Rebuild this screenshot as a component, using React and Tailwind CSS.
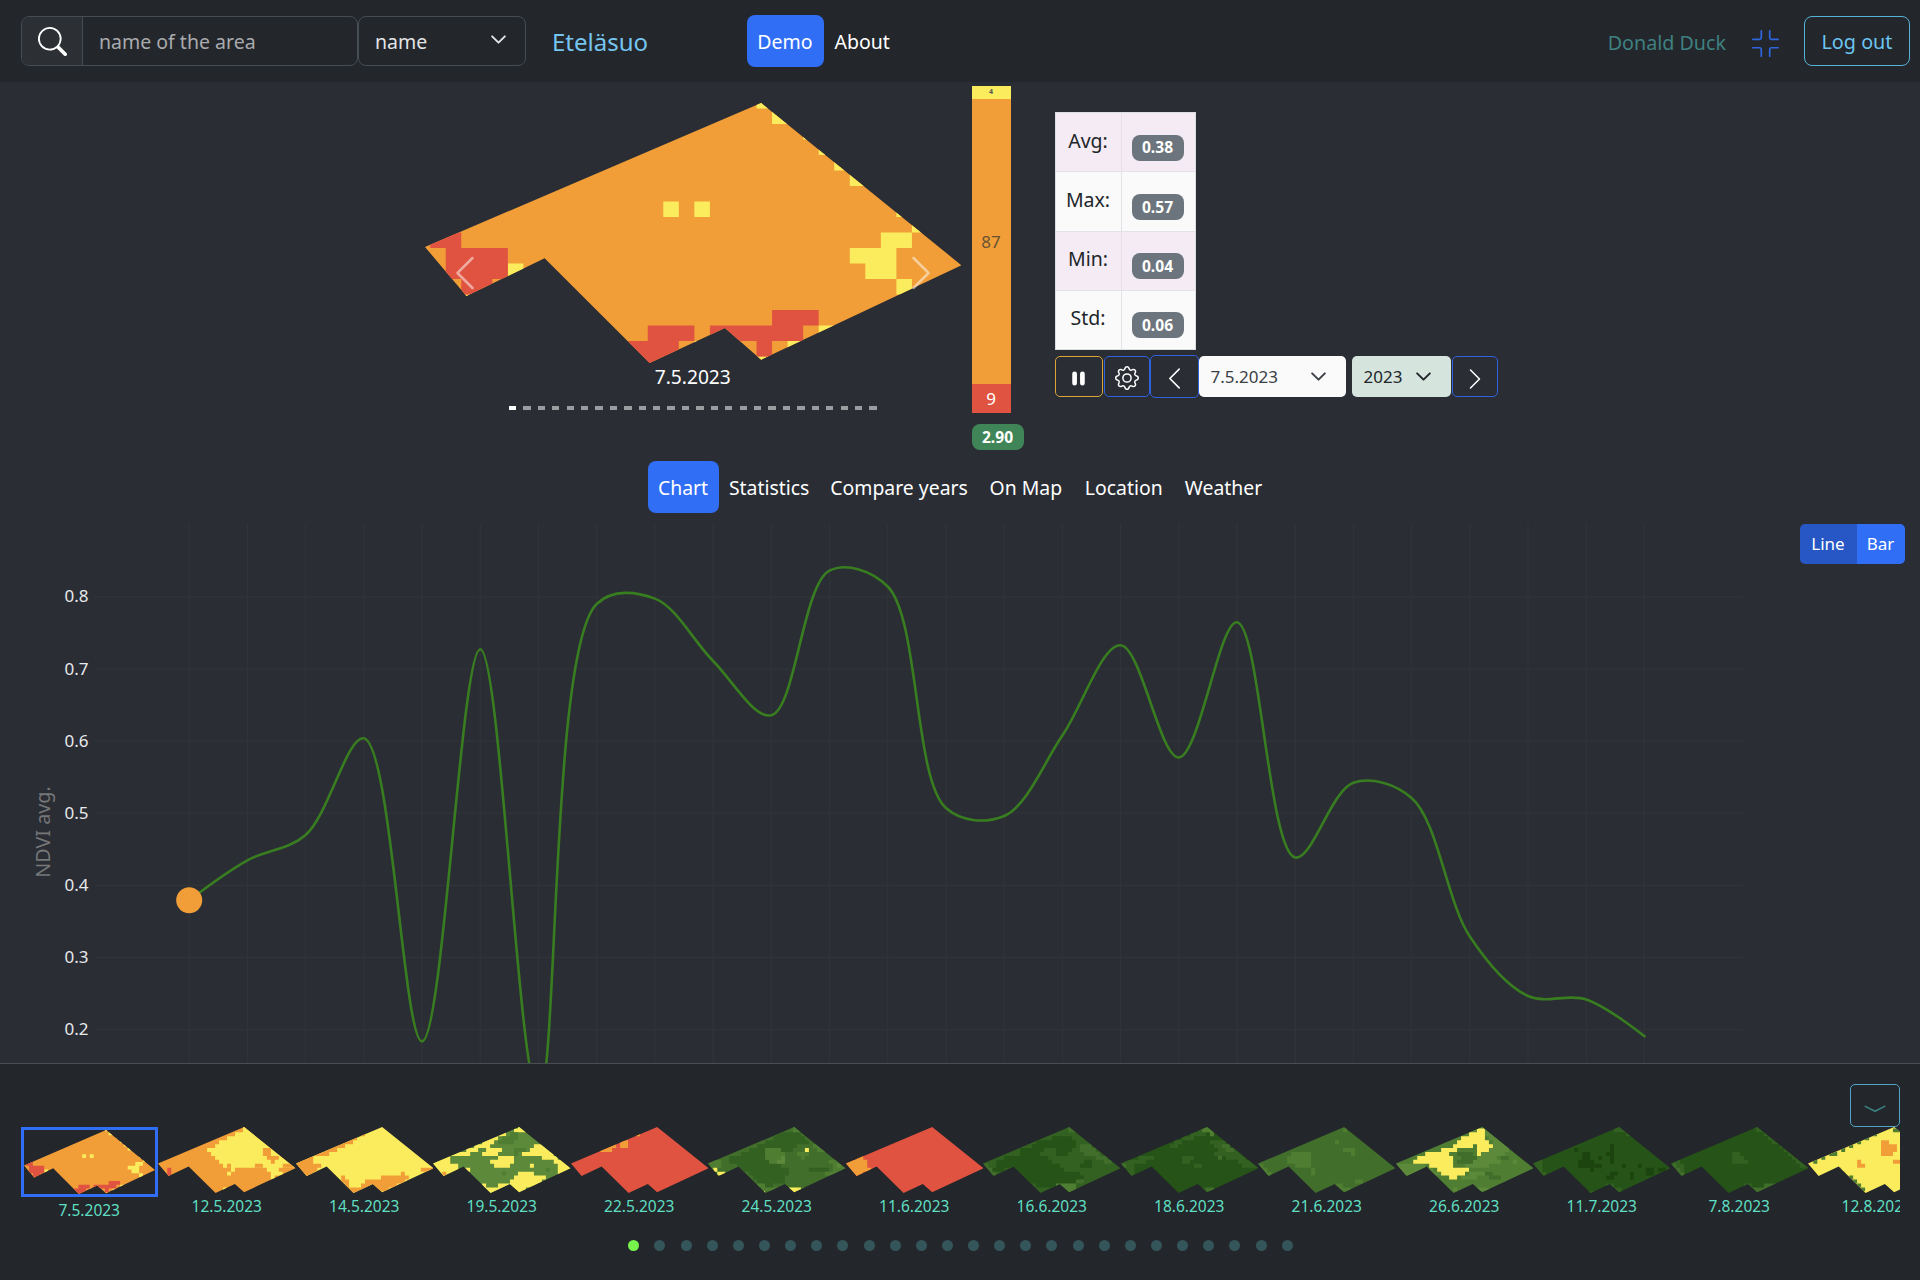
import React from 'react';
import {
  BsChevronCompactDown,
  BsChevronLeft,
  BsChevronRight,
  BsFullscreenExit,
  BsGear,
  BsPauseFill,
  BsSearch,
} from 'react-icons/bs';

const RED = '#e05340';
const ORANGE = '#f19e38';
const YELLOW = '#fbec5d';
const G1 = '#5c8a3a';
const G2 = '#4f7e33';
const G3 = '#416f2b';
const G4 = '#336122';
const G5 = '#265317';
const G6 = '#1c440f';

const OUTLINE =
  '0.667,9.935 22.3,0.645 35.19,11.118 22.3,17.204 19.965,15.16 15.12,17.42 8.363,10.667 3.333,13.097';

// Each layer lists runs of raster cells as "row:firstColumn-endColumn".
const FIELDS = [
  {
    date: '7.5.2023',
    base: ORANGE,
    layers: [
      [YELLOW, '0:22-23 1:23-24 2:25-26 3:26-27 4:27-28 5:28-29 7:31-32 8:32-33 7:16-17 7:18-19 9:30-32 10:28-31 11:29-31 12:31-32 15:26-27 16:24-25 17:22-23 11:6-7 13:3-4 16:18-19'],
      [RED, '9:1-3 10:2-6 11:2-6 12:3-5 14:23-26 15:15-18 15:19-25 16:13-17 16:22-23 17:13-17'],
    ],
  },
  {
    date: '12.5.2023',
    base: ORANGE,
    layers: [
      [YELLOW, '0:22-36 1:22-36 2:20-36 3:18-36 4:16-36 5:15-36 6:13-36 7:14-36 8:15-36 9:16-36 10:17-36 11:19-20 11:28-31 12:18-19 12:29-32 13:29-30 16:17-18'],
      [ORANGE, '6:27-29 7:27-29 8:28-31 9:29-30 10:18-19 10:25-27 10:32-36'],
      [RED, '11:3-4 12:3-4'],
    ],
  },
  {
    date: '14.5.2023',
    base: YELLOW,
    layers: [
      [ORANGE, '1:17-19 2:15-18 3:14-16 4:12-15 5:10-13 6:8-11 7:5-9 8:0-5 9:0-5 10:0-7 11:0-6 12:0-5 13:0-4 13:12-13 14:12-14 15:13-14 16:13-17 17:13-17 11:32-36 12:27-28 13:22-29 14:18-28 15:17-26 16:17-24'],
    ],
  },
  {
    date: '19.5.2023',
    base: G1,
    layers: [
      [YELLOW, '0:22-24 1:21-24 2:17-19 3:14-17 4:13-16 5:11-15 5:26-29 6:9-12 6:14-18 6:25-30 7:5-10 7:13-17 7:23-31 8:0-5 8:17-21 8:28-32 9:0-5 9:15-21 9:31-34 10:0-7 10:16-20 10:25-26 10:32-35 11:0-7 11:8-10 11:32-36 12:0-7 12:22-26 12:32-34 13:3-4 13:21-29 14:20-28 15:13-14 15:17-27 16:13-24 17:13-24'],
      [ORANGE, '12:3-4'],
      [G2, '2:20-22 3:18-22 4:17-21 6:21-24 7:21-22 12:18-19 11:29-30'],
    ],
  },
  {
    date: '22.5.2023',
    base: RED,
    layers: [[ORANGE, '2:17-18 4:13-15 5:9-12 5:13-15 6:8-11']],
  },
  {
    date: '24.5.2023',
    base: G3,
    layers: [
      [G4, '2:18-24 3:17-25 4:15-26 5:13-23 6:11-22 7:9-15 8:6-15 9:6-16 10:8-19 11:9-21 12:11-21 13:12-20 14:13-20 15:14-17 11:26-31'],
      [G2, '0:22-24 1:22-25 6:15-19 7:15-20 8:15-20 9:16-20 5:27-29 6:28-30 7:23-26 8:24-25 9:0-4 10:0-4 11:0-3 9:31-35 10:32-36 11:32-36 12:30-34 15:13-15 16:14-26'],
      [G1, '8:19-20 9:18-20 11:1-2 10:33-34'],
      [YELLOW, '6:25-26 11:2-3 12:3-5 16:21-24 17:14-15 17:21-24'],
    ],
  },
  {
    date: '11.6.2023',
    base: RED,
    layers: [[ORANGE, '8:3-5 9:0-6 10:0-6 11:0-7 12:0-5 13:0-5']],
  },
  {
    date: '16.6.2023',
    base: G4,
    layers: [
      [G5, '3:18-23 4:14-24 5:13-24 6:10-16 6:19-23 7:10-15 7:19-22 8:6-17 9:4-18 9:26-28 10:4-20 10:25-28 11:3-6 11:8-21 12:10-25 13:11-26 14:12-25 15:14-20'],
      [G3, '0:22-24 1:22-24 5:25-28 6:25-29 7:26-30 8:29-32 9:31-33 10:0-2 11:1-3 12:2-4 14:24-26'],
      [G2, '15:19-24 16:21-24 17:21-24'],
    ],
  },
  {
    date: '18.6.2023',
    base: G5,
    layers: [
      [G4, '1:20-25 2:18-22 3:16-19 4:14-16 5:13-15 8:5-9 9:0-7 10:0-4 11:2-4 12:2-4 8:16-19 9:16-18 10:19-21 4:23-27 5:24-28 6:25-30 7:24-31 8:27-32 9:30-34 10:31-36 16:21-24 17:21-24'],
      [G3, '5:26-28 6:27-29 8:25-26 16:22-24 10:0-2'],
      [G2, '0:21-24 1:21-24 2:23-24'],
    ],
  },
  {
    date: '21.6.2023',
    base: G3,
    layers: [
      [G2, '1:22-23 4:20-21 6:22-25 7:24-25 7:9-14 8:8-14 9:8-14 10:10-14 11:14-15 12:14-15 10:0-2 11:1-3 12:2-4 14:25-27 15:20-22 16:20-24 17:21-24'],
    ],
  },
  {
    date: '26.6.2023',
    base: G2,
    layers: [
      [G1, '0:22-24 1:18-25 2:23-26 3:24-27 4:25-29 5:25-31 6:24-29 7:21-28 8:21-26 9:20-27 10:0-8 11:0-10 12:2-12 10:18-24 12:19-23 13:17-21 16:21-24'],
      [G3, '7:16-20 8:17-21 9:16-20 12:23-25 13:24-27 8:27-29'],
      [YELLOW, '1:21-23 2:19-23 3:17-23 4:16-24 5:15-20 5:21-25 6:12-16 6:21-24 7:8-14 7:21-22 8:6-15 9:5-15 10:9-15 11:11-19 12:12-18 13:14-16'],
      [G1, '9:30-31 16:15-16'],
    ],
  },
  {
    date: '11.7.2023',
    base: G5,
    layers: [
      [G4, '0:21-24 1:21-24 2:24-25 9:0-3 10:0-3 11:1-3 12:2-4 15:19-21 16:20-23 17:21-23 17:14-16'],
      [G6, '5:20-21 6:11-12 6:20-21 7:13-15 7:19-21 8:13-15 8:17-18 8:20-21 9:12-16 9:20-21 10:12-18 10:23-24 10:27-28 11:15-16 11:29-31 11:32-34 12:20-22 12:25-26 12:29-31 13:19-21 13:25-26'],
    ],
  },
  {
    date: '7.8.2023',
    base: G5,
    layers: [
      [G4, '0:21-24 1:22-25 2:24-25 3:25-27 4:26-28 5:28-29 6:29-30 7:30-32 8:31-33 9:32-34 10:33-36 7:16-18 8:16-19 9:16-20 9:0-3 10:0-4 11:1-4 15:19-21'],
      [G3, '10:1-2 11:2-3 12:2-4 13:3-4 16:20-25 17:21-24 15:24-27'],
    ],
  },
  {
    date: '12.8.2023',
    base: YELLOW,
    layers: [
      [G2, '0:23-24 1:18-19 1:22-25 2:17-18 2:24-26 3:15-16 4:13-14 5:11-12 6:9-10 7:6-8 8:4-5 9:2-3 11:8-9 12:9-10 13:11-12 14:12-13 15:13-14 16:14-15'],
      [ORANGE, '4:19-21 5:19-23 6:19-23 7:19-22 9:13-14 10:13-15 9:22-24'],
    ],
  },
];

function runsToPath(runs) {
  return runs
    .split(' ')
    .map((run) => {
      const [row, span] = run.split(':');
      const [from, to] = span.split('-').map(Number);
      return `M${from} ${row}h${to - from}v1h${from - to}z`;
    })
    .join('');
}

function Field({ field, id, className }) {
  return (
    <svg viewBox="0.667 0.645 34.523 16.775" preserveAspectRatio="none" className={className}>
      <clipPath id={id}>
        <polygon points={OUTLINE} />
      </clipPath>
      <polygon points={OUTLINE} fill={field.base} />
      <g clipPath={`url(#${id})`}>
        {field.layers.map(([color, runs], i) => (
          <path key={i} d={runsToPath(runs)} fill={color} />
        ))}
      </g>
    </svg>
  );
}

function Caret({ className }) {
  return (
    <svg viewBox="0 0 16 16" fill="none" className={className}>
      <path d="m2 5 6 6 6-6" stroke="currentColor" strokeWidth="1.8" strokeLinecap="round" strokeLinejoin="round" />
    </svg>
  );
}

function Navbar() {
  return (
    <header className="flex h-[82px] shrink-0 items-start bg-[#23262b] pl-[21px] pr-[10px]">
      <div className="mt-4 flex h-[50px] w-[337px] overflow-hidden rounded-lg border border-[#454c52]">
        <div className="flex w-[61px] items-center justify-center border-r border-[#454c52] bg-[#2c3035] text-white">
          <BsSearch className="h-[29px] w-[29px]" />
        </div>
        <div className="flex items-center pl-4 pt-[2px] text-[19.5px] text-[#a9abae]">name of the area</div>
      </div>
      <div className="mt-4 flex h-[50px] w-[168px] items-center justify-between rounded-lg border border-[#454c52] pl-4 pr-[18px] text-[19.5px] text-[#e2e4e6]">
        <span className="pt-[2px]">name</span>
        <Caret className="mb-1 h-[17px] w-[17px]" />
      </div>
      <div className="mt-[24px] w-[220.5px] pl-[26px] text-[24px] leading-[36px] text-[#76c5f0]">Eteläsuo</div>
      <nav className="mt-[14.5px] flex h-[52px] items-center text-[19.5px] text-white">
        <span className="flex h-full w-[77px] items-center justify-center rounded-lg bg-[#316ef6] pt-[2px]">Demo</span>
        <span className="pl-[11px] pt-[2px]">About</span>
      </nav>
      <div className="ml-auto mt-4 flex h-[50px] items-center">
        <span className="pt-[3px] text-[19.7px] text-[#3e8080]">Donald Duck</span>
        <BsFullscreenExit className="ml-[26px] mt-1 h-[27px] w-[27px] text-[#2f66e0]" />
        <span className="ml-[25px] flex h-full w-[106px] items-center justify-center rounded-lg border-[1.5px] border-[#55b3d6] pt-[2px] text-[19.8px] text-[#6cc4f0]">
          Log out
        </span>
      </div>
    </header>
  );
}

function Carousel() {
  return (
    <div className="relative ml-[424.5px] flex w-[536.5px] flex-col items-center pt-[20.5px]">
      <Field field={FIELDS[0]} id="main-field" className="h-[260px] w-[536.5px]" />
      <BsChevronLeft className="absolute left-[20px] top-[171px] h-[40px] w-[40px] text-white/50" />
      <BsChevronRight className="absolute right-[20.5px] top-[171px] h-[40px] w-[40px] text-white/50" />
      <div className="text-[19.2px] leading-[28px] text-white">7.5.2023</div>
      <div className="mt-[15.5px] flex gap-[7.1px]">
        {Array.from({ length: 26 }, (_, i) => (
          <span key={i} className={i === 0 ? 'h-[4px] w-[7.33px] bg-white' : 'h-[4px] w-[7.33px] bg-[#9a9ca0]'} />
        ))}
      </div>
    </div>
  );
}

function Distribution() {
  return (
    <div className="ml-[10.5px] mt-1 flex w-[52px] flex-col">
      <div className="flex w-[39px] flex-col text-center text-[17px]">
        <div className="flex h-[13px] items-center justify-center bg-[#fbec5d] text-[7px] font-bold text-[#555]">4</div>
        <div className="flex h-[285px] items-center justify-center bg-[#f19e38] text-[#6a5132]">87</div>
        <div className="flex h-[29px] items-center justify-center bg-[#e05340] text-white">9</div>
      </div>
      <div className="mt-[11px] flex h-[26px] items-center justify-center rounded-lg bg-[#3f8557] pt-px text-[15.6px] font-bold text-white">
        2.90
      </div>
    </div>
  );
}

const STATS = [
  ['Avg:', '0.38'],
  ['Max:', '0.57'],
  ['Min:', '0.04'],
  ['Std:', '0.06'],
];

function StatsTable() {
  return (
    <div className="flex h-[238px] w-[141px] flex-col border border-[#dcdee2] bg-[#fafafa]">
      {STATS.map(([label, value], i) => (
        <div
          key={label}
          className={
            i % 2 === 0
              ? 'flex flex-1 border-b border-[#e4e2e8] bg-[#f4ebf4]'
              : 'flex flex-1 border-b border-[#e4e2e8] last:border-b-0'
          }
        >
          <div className="w-[66px] border-r border-[#e4e2e8] pt-[12.5px] text-center text-[19.5px] leading-[30px] text-[#212529]">
            {label}
          </div>
          <div className="pl-[10px] pt-[21.5px]">
            <div className="flex h-[26px] w-[52px] items-center justify-center rounded-lg bg-[#6c757d] pt-px text-[15.6px] font-bold text-white">
              {value}
            </div>
          </div>
        </div>
      ))}
    </div>
  );
}

function Controls() {
  return (
    <div className="mt-[6px] flex h-[41px] items-center">
      <div className="flex h-[41px] w-[48px] items-center justify-center rounded-[5px] border-[1.5px] border-[#dca53a] text-white">
        <BsPauseFill className="mt-1 h-[25px] w-[25px]" />
      </div>
      <div className="ml-px flex h-[41px] w-[46px] items-center justify-center rounded-[5px] border-[1.5px] border-[#2f62dd] text-white">
        <BsGear className="mt-[3px] h-[24px] w-[24px]" />
      </div>
      <div className="flex h-[43px] w-[49px] items-center justify-center rounded-[5px] border-[1.5px] border-[#2f62dd] text-white">
        <BsChevronLeft className="mt-[3px] h-[25px] w-[25px]" />
      </div>
      <div className="flex h-[41px] w-[147px] items-center justify-between rounded-[5px] bg-[#fafafa] pl-3 pr-[19px] text-[17px] text-[#3a3f45]">
        7.5.2023
        <Caret className="h-[17px] w-[17px]" />
      </div>
      <div className="ml-[6px] flex h-[41px] w-[99px] items-center justify-between rounded-[5px] bg-[#d5e5de] pl-3 pr-[19px] text-[17px] text-[#212529]">
        2023
        <Caret className="h-[17px] w-[17px]" />
      </div>
      <div className="ml-px flex h-[41px] w-[46px] items-center justify-center rounded-[5px] border-[1.5px] border-[#2f62dd] text-white">
        <BsChevronRight className="mt-1 h-[24px] w-[24px]" />
      </div>
    </div>
  );
}

function Tabs() {
  return (
    <nav className="ml-[647.5px] flex h-[52px] shrink-0 items-center text-[19.4px] text-white">
      <span className="flex h-full w-[71px] items-center justify-center rounded-lg bg-[#316ef6] pt-[2px]">Chart</span>
      <span className="px-[10.4px] pt-[2px]">Statistics</span>
      <span className="px-[10.6px] pt-[2px]">Compare years</span>
      <span className="px-[11.2px] pt-[2px]">On Map</span>
      <span className="px-[11.5px] pt-[2px]">Location</span>
      <span className="px-[10.7px] pt-[2px]">Weather</span>
    </nav>
  );
}

const STEP = 58.21;
const LEFT = 189.2;
const SERIES = [
  900.2, 860.3, 835, 738.3, 1041.3, 649.2, 1095, 604, 598.6, 661, 715.3, 570.7, 586.5, 808, 816, 735.6, 645.2,
  757.5, 622.2, 857.5, 782.8, 798, 936.5, 996, 999.4, 1036.2,
].map((y, i) => ({ x: LEFT + STEP * i, y }));

// Centripetal Catmull-Rom spline, written as cubic Bézier segments.
function smoothPath(points) {
  const len = (a, b) => Math.hypot(b.x - a.x, b.y - a.y);
  let d = `M${points[0].x} ${points[0].y}`;
  for (let i = 0; i < points.length - 1; i++) {
    const p0 = points[i - 1];
    const p1 = points[i];
    const p2 = points[i + 1];
    const p3 = points[i + 2];
    const d12 = len(p1, p2);
    let c1 = p1;
    let c2 = p2;
    if (p0) {
      const d01 = len(p0, p1);
      const m = Math.sqrt(d01 * d12);
      const a = 2 * d01 + 3 * m + d12;
      const n = 3 * (d01 + m);
      c1 = { x: (p1.x * a - p0.x * d12 + p2.x * d01) / n, y: (p1.y * a - p0.y * d12 + p2.y * d01) / n };
    }
    if (p3) {
      const d23 = len(p2, p3);
      const m = Math.sqrt(d23 * d12);
      const b = 2 * d23 + 3 * m + d12;
      const n = 3 * (d23 + m);
      c2 = { x: (p2.x * b + p1.x * d23 - p3.x * d12) / n, y: (p2.y * b + p1.y * d23 - p3.y * d12) / n };
    }
    d += `C${c1.x} ${c1.y} ${c2.x} ${c2.y} ${p2.x} ${p2.y}`;
  }
  return d;
}

function Chart() {
  return (
    <section className="relative mt-[11px] h-[539px] shrink-0 overflow-hidden">
      <svg viewBox="0 524 1920 539" className="h-[539px] w-[1920px]">
        <g stroke="#313437" strokeWidth="1.2">
          {SERIES.map((p) => (
            <line key={p.x} x1={p.x} x2={p.x} y1="524" y2="1063" />
          ))}
          {[0, 1, 2, 3, 4, 5, 6].map((i) => (
            <line key={i} x1="95" x2="1742.5" y1={596.9 + 72.1 * i} y2={596.9 + 72.1 * i} />
          ))}
        </g>
        <g fill="#e8e9ea" fontSize="17" textAnchor="end">
          {['0.8', '0.7', '0.6', '0.5', '0.4', '0.3', '0.2'].map((label, i) => (
            <text key={label} x="88.5" y={602.4 + 72.1 * i}>
              {label}
            </text>
          ))}
        </g>
        <text transform="translate(50 832) rotate(-90)" textAnchor="middle" fontSize="19.8" fill="#757779">
          NDVI avg.
        </text>
        <path d={smoothPath(SERIES)} fill="none" stroke="#387d20" strokeWidth="2.6" strokeLinecap="round" />
        <circle cx={LEFT} cy="900.2" r="13" fill={ORANGE} />
      </svg>
      <div className="absolute right-[15.5px] top-0 flex h-[40px] overflow-hidden rounded-[5px] text-[17px] text-white">
        <span className="flex w-[57px] items-center justify-center bg-[#2657c5]">Line</span>
        <span className="flex w-[48px] items-center justify-center bg-[#316ef6]">Bar</span>
      </div>
    </section>
  );
}

function Timeline() {
  return (
    <footer className="flex flex-1 flex-col border-t border-[#4a4d52] bg-[#23262b] px-[20.5px]">
      <div className="mt-[20.5px] flex h-[43px] w-[50px] items-center justify-center self-end rounded-[5px] border-[1.5px] border-[#4fa3c7]">
        <BsChevronCompactDown className="mt-1 h-[26px] w-[26px] text-[#3a8080]" />
      </div>
      <div className="flex h-[102px] items-start overflow-hidden text-[15.5px] leading-[22px] text-[#5fdfc2]">
        {FIELDS.map((field, i) => (
          <div key={field.date} className="flex w-[137.5px] shrink-0 flex-col items-center">
            {i === 0 ? (
              <div className="h-[70px] w-[137px] border-[3.5px] border-[#316ef6]">
                <Field field={field} id="thumb-0" className="h-[64px] w-[131px]" />
              </div>
            ) : (
              <Field field={field} id={`thumb-${i}`} className="h-[66px] w-[137.5px]" />
            )}
            <span className="mt-[2px]">{field.date}</span>
          </div>
        ))}
      </div>
      <div className="ml-px mt-[11px] flex justify-center gap-[15.15px]">
        {Array.from({ length: 26 }, (_, i) => (
          <span
            key={i}
            className={i === 0 ? 'h-[11px] w-[11px] rounded-full bg-[#76f44b]' : 'h-[11px] w-[11px] rounded-full bg-[#34555a]'}
          />
        ))}
      </div>
    </footer>
  );
}

export default function App() {
  return (
    <div className="flex h-[1280px] w-[1920px] flex-col overflow-hidden bg-[#2a2d34] font-['Noto_Sans',sans-serif]">
      <Navbar />
      <section className="flex h-[378.5px] shrink-0">
        <Carousel />
        <Distribution />
        <div className="ml-[31px] mt-[30px] flex flex-col">
          <StatsTable />
          <Controls />
        </div>
      </section>
      <Tabs />
      <Chart />
      <Timeline />
    </div>
  );
}
